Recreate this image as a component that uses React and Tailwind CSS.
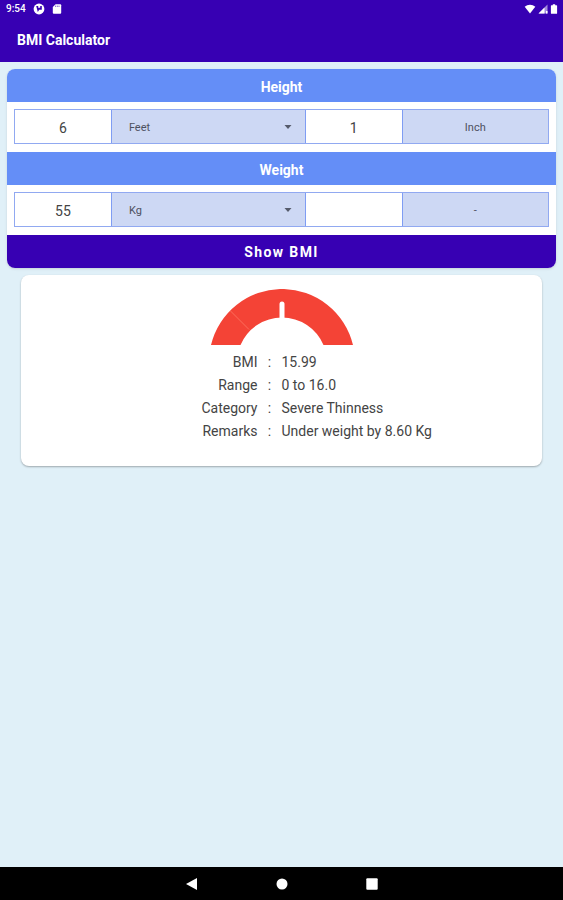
import React, { useState } from 'react';

const StatusBar = () => (
    <div className="flex items-center justify-between h-[18px] pl-[6px] pr-[5px] text-white">
        <div className="flex items-center gap-[7px]">
            <span className="text-[10px] leading-4 font-medium">9:54</span>
            <svg viewBox="0 0 12 12" className="w-3 h-3">
                <circle cx="6" cy="6" r="5.4" fill="currentColor" />
                <path d="M3.2 3h2v1.700h2V3h1.600v3.800H6.200L4.800 9z" fill="#3700b3" />
            </svg>
            <svg viewBox="0 0 10 12" className="w-[10px] h-3">
                <path d="M3.6 1.2h4.6a1 1 0 0 1 1 1v7.6a1 1 0 0 1-1 1H1.8a1 1 0 0 1-1-1V4z" fill="currentColor" />
                <path d="M3.6 2.600v1.4M5.3 2.600v1.4M7 2.600v1.4" stroke="#3700b3" strokeWidth=".6" />
            </svg>
        </div>
        <div className="flex items-center gap-[2px]">
            <svg viewBox="0 0 12 10" className="w-3 h-[10px]">
                <path d="M6 9.6.7 2.8C2.200 1.400 4 .7 6 .7s3.800.7 5.300 2.100z" fill="currentColor" />
            </svg>
            <svg viewBox="0 0 10 10" className="w-[10px] h-[10px]">
                <path d="M9.500.5v9H.5z" fill="currentColor" opacity=".55" />
                <path d="M6.500 3.500v6h-6zM8 7h1.500v2.500H8z" fill="currentColor" />
            </svg>
            <svg viewBox="0 0 8 10" className="w-2 h-[10px]">
                <path d="M2.800.2h2.400v1H6.500a.6.6 0 0 1 .6.6v7.400a.6.6 0 0 1-.6.6h-5a.6.6 0 0 1-.6-.6V1.800a.6.6 0 0 1 .6-.6h1.300z" fill="currentColor" />
            </svg>
        </div>
    </div>
);

const SectionTitle = ({ children }) => (
    <h2 className="h-[33px] flex items-center justify-center bg-[#648ef7] text-white text-sm font-bold pt-[2px]">
        {children}
    </h2>
);

const NumberCell = ({ label, value, onChange }) => (
    <input
        type="text"
        inputMode="decimal"
        aria-label={label}
        value={value}
        onChange={(e) => onChange(e.target.value)}
        className="w-full min-w-0 bg-white border-r border-[#7f9df3] pt-[2px] text-center text-sm text-[#444] outline-none"
    />
);

const UnitSelect = ({ label, value, options, onChange }) => (
    <div className="relative flex min-w-0 border-r border-[#7f9df3]">
        <select
            aria-label={label}
            value={value}
            onChange={(e) => onChange(e.target.value)}
            className="w-full appearance-none bg-[#cdd8f4] pt-[3px] pl-[17px] pr-8 text-[11px] text-[#4d5160] outline-none"
        >
            {options.map((o) => <option key={o}>{o}</option>)}
        </select>
        <svg viewBox="0 0 8 4" className="absolute right-[13px] top-1/2 -translate-y-1/2 w-2 h-1 pointer-events-none">
            <path d="M.5 0h7L4 4z" fill="#555b6b" />
        </svg>
    </div>
);

const FieldRow = ({ children }) => (
    <div className="pt-[7px] pb-2 px-[7px] bg-white">
        <div className="grid grid-cols-[2fr_4fr_2fr_3fr] h-[35px] border border-[#91a9f1]">
            {children}
        </div>
    </div>
);

const UnitCell = ({ children }) => (
    <div className="flex items-center justify-center bg-[#cdd8f4] pt-[3px] text-[11px] text-[#4d5160]">{children}</div>
);

const Gauge = () => (
    <svg viewBox="0 0 146 56" className="w-[146px] h-14 mx-auto">
        <path d="M2 56A73 73 0 0 1 144 56H114.500A45 45 0 0 0 31.500 56z" fill="#f44336" />
        <path d="M21.500 22 40 40.500" stroke="#ff8a75" strokeWidth=".6" />
        <path d="M73 31V15" stroke="#fff" strokeWidth="5" strokeLinecap="round" />
    </svg>
);

const results = [
    ['BMI', '15.99'],
    ['Range', '0 to 16.0'],
    ['Category', 'Severe Thinness'],
    ['Remarks', 'Under weight by 8.60 Kg'],
];

const App = () => {
    const [feet, setFeet] = useState('6');
    const [inch, setInch] = useState('1');
    const [weight, setWeight] = useState('55');
    const [extra, setExtra] = useState('');
    const [heightUnit, setHeightUnit] = useState('Feet');
    const [weightUnit, setWeightUnit] = useState('Kg');

    return (
        <div className="min-h-screen flex flex-col bg-[#e0f0f8] font-[Roboto,sans-serif]">
            <header className="bg-[#3700b3]">
                <StatusBar />
                <h1 className="h-11 flex items-center px-[17px] text-white text-sm font-bold">BMI Calculator</h1>
            </header>

            <main className="flex-1 p-[7px]">
                <form
                    onSubmit={(e) => e.preventDefault()}
                    className="rounded-lg overflow-hidden bg-white shadow-sm"
                >
                    <SectionTitle>Height</SectionTitle>
                    <FieldRow>
                        <NumberCell label="Height" value={feet} onChange={setFeet} />
                        <UnitSelect label="Height unit" value={heightUnit} options={['Feet', 'Cm']} onChange={setHeightUnit} />
                        <NumberCell label="Height inches" value={inch} onChange={setInch} />
                        <UnitCell>Inch</UnitCell>
                    </FieldRow>
                    <SectionTitle>Weight</SectionTitle>
                    <FieldRow>
                        <NumberCell label="Weight" value={weight} onChange={setWeight} />
                        <UnitSelect label="Weight unit" value={weightUnit} options={['Kg', 'Lb']} onChange={setWeightUnit} />
                        <NumberCell label="Weight remainder" value={extra} onChange={setExtra} />
                        <UnitCell>-</UnitCell>
                    </FieldRow>
                    <button type="submit" className="block w-full h-[33px] bg-[#3700b3] text-white text-sm font-bold tracking-widest">
                        Show BMI
                    </button>
                </form>

                {/* Result */}
                <section className="mx-[14px] mt-[7px] pt-[14px] pb-[23px] rounded-lg bg-white shadow-[0_1px_2px_rgba(0,0,0,0.3)]">
                    <Gauge />
                    <dl className="mt-[6px] text-sm text-[#444]">
                        {results.map(([label, value]) => (
                            <div key={label} className="grid grid-cols-[1fr_24px_50%] leading-[23px]">
                                <dt className="text-right">{label}</dt>
                                <dd className="text-center">:</dd>
                                <dd className="whitespace-nowrap">{value}</dd>
                            </div>
                        ))}
                    </dl>
                </section>
            </main>

            <nav className="h-[33px] bg-black flex items-center justify-center gap-[72px]">
                <button type="button" aria-label="Back" className="w-[18px] flex justify-center">
                    <svg viewBox="0 0 12 14" className="w-3 h-[14px]"><path d="M11 1v12L0 7z" fill="#fff" /></svg>
                </button>
                <button type="button" aria-label="Home" className="w-[18px] flex justify-center">
                    <svg viewBox="0 0 12 12" className="w-3 h-3"><circle cx="6" cy="6" r="5.500" fill="#fff" /></svg>
                </button>
                <button type="button" aria-label="Recents" className="w-[18px] flex justify-center">
                    <svg viewBox="0 0 12 12" className="w-3 h-3"><rect x=".3" y=".3" width="11.400" height="11.400" rx="1" fill="#fff" /></svg>
                </button>
            </nav>
        </div>
    );
};

export default App;
